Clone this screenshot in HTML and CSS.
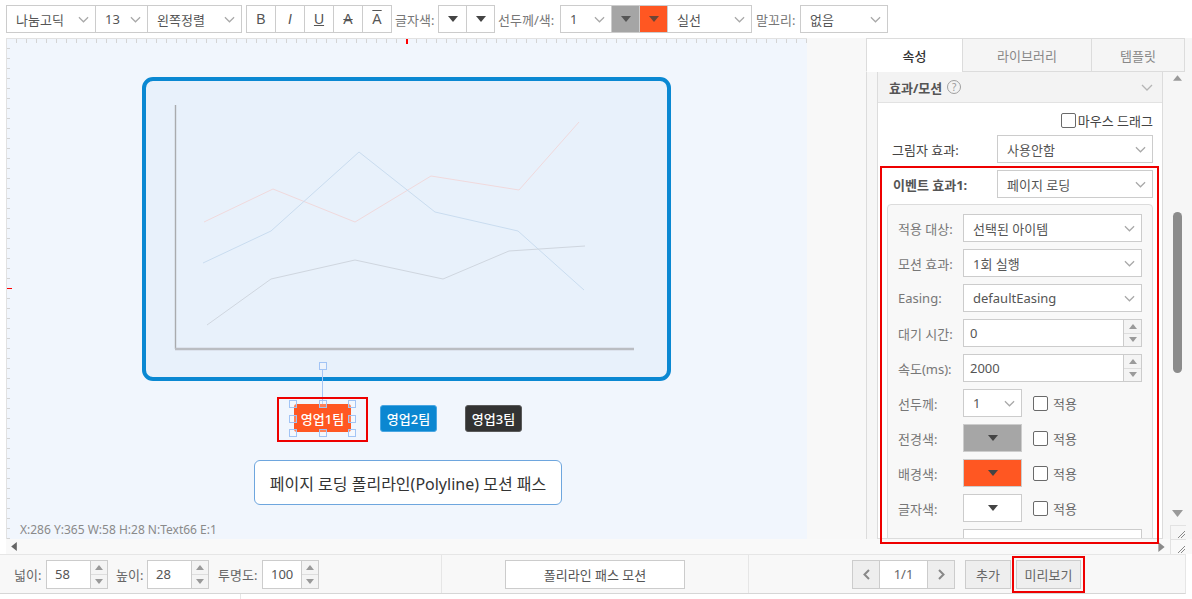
FILE: index.html
```html
<!DOCTYPE html>
<html lang="ko">
<head>
<meta charset="utf-8">
<title>모션 편집기</title>
<link rel="stylesheet" href="styles.css">
</head>
<body>
<div class="toolbar">
  <div class="grp">
    <div class="sel w-font"><span>나눔고딕</span><svg class="chev" viewBox="0 0 12 7"><path d="M1 1l5 5 5-5"/></svg></div>
    <div class="sel w-size"><span>13</span><svg class="chev" viewBox="0 0 12 7"><path d="M1 1l5 5 5-5"/></svg></div>
    <div class="sel w-align"><span>왼쪽정렬</span><svg class="chev" viewBox="0 0 12 7"><path d="M1 1l5 5 5-5"/></svg></div>
  </div>
  <div class="grp fmt">
    <div class="fbtn">B</div>
    <div class="fbtn it">I</div>
    <div class="fbtn ul">U</div>
    <div class="fbtn st">A</div>
    <div class="fbtn ov">A</div>
  </div>
  <span class="lbl l-fc">글자색:</span>
  <div class="grp">
    <div class="dd first"><svg class="tri" viewBox="0 0 10 6"><path d="M0 0h10L5 6z"/></svg></div>
    <div class="dd"><svg class="tri" viewBox="0 0 10 6"><path d="M0 0h10L5 6z"/></svg></div>
  </div>
  <span class="lbl l-line">선두께/색:</span>
  <div class="grp">
    <div class="sel w-lw"><span>1</span><svg class="chev" viewBox="0 0 12 7"><path d="M1 1l5 5 5-5"/></svg></div>
    <div class="dd gray"><svg class="tri" viewBox="0 0 10 6"><path d="M0 0h10L5 6z"/></svg></div>
    <div class="dd orange"><svg class="tri" viewBox="0 0 10 6"><path d="M0 0h10L5 6z"/></svg></div>
    <div class="sel w-ls"><span>실선</span><svg class="chev" viewBox="0 0 12 7"><path d="M1 1l5 5 5-5"/></svg></div>
  </div>
  <span class="lbl l-tail">말꼬리:</span>
  <div class="grp">
    <div class="sel w-tail"><span>없음</span><svg class="chev" viewBox="0 0 12 7"><path d="M1 1l5 5 5-5"/></svg></div>
  </div>
</div>

<div class="main">
  <div class="workspace">
    <div class="canvas">
      <div class="ruler-top"></div>
      <div class="ruler-left"></div>
      <div class="mark-top"></div>
      <div class="mark-left"></div>

      <div class="chart-box">
        <svg class="chart" viewBox="142 77 529 304" width="529" height="304">
          <polyline class="ln pink" points="204,222 273,189 355,222 431,176 519,190 579,122"/>
          <polyline class="ln blue" points="203,263 271,231 359,152 435,212 518,231 584,290"/>
          <polyline class="ln grayl" points="207,325 271,279 355,260 443,279 509,251 585,246"/>
          <line class="axis-y" x1="175.5" y1="105" x2="175.5" y2="349"/>
          <line class="axis-x" x1="175" y1="349" x2="634" y2="349"/>
        </svg>
      </div>

      <div class="conn"></div>
      <div class="handle h-top"></div>
      <div class="sel-rect"></div>
      <div class="team t1">영업1팀</div>
      <div class="handle h1"></div>
      <div class="handle h2"></div>
      <div class="handle h3"></div>
      <div class="handle h4"></div>
      <div class="handle h5"></div>
      <div class="handle h6"></div>
      <div class="handle h7"></div>
      <div class="handle h8"></div>
      <div class="team t2">영업2팀</div>
      <div class="team t3">영업3팀</div>

      <div class="caption">페이지 로딩 폴리라인(Polyline) 모션 패스</div>
      <div class="status">X:286 Y:365 W:58 H:28 N:Text66 E:1</div>
    </div>

    <div class="side-gap"></div>

    <div class="panel">
      <div class="tabs">
        <div class="tab active">속성</div>
        <div class="tab t-lib">라이브러리</div>
        <div class="tab t-tpl">템플릿</div>
      </div>
      <div class="pbody">
        <div class="pcontent">
          <div class="sec-head">
            <span class="sec-title">효과/모션</span>
            <span class="help">?</span>
            <svg class="chev sec-chev" viewBox="0 0 12 7"><path d="M1 1l5 5 5-5"/></svg>
          </div>
          <div class="drag-row"><span class="cb"></span><span>마우스 드래그</span></div>
          <div class="frow">
            <span class="flabel">그림자 효과:</span>
            <div class="fsel"><span>사용안함</span><svg class="chev" viewBox="0 0 12 7"><path d="M1 1l5 5 5-5"/></svg></div>
          </div>
          <div class="frow">
            <span class="flabel strong">이벤트 효과1:</span>
            <div class="fsel"><span>페이지 로딩</span><svg class="chev" viewBox="0 0 12 7"><path d="M1 1l5 5 5-5"/></svg></div>
          </div>
          <div class="ibox">
            <div class="irow">
              <span class="ilabel">적용 대상:</span>
              <div class="fsel full"><span>선택된 아이템</span><svg class="chev" viewBox="0 0 12 7"><path d="M1 1l5 5 5-5"/></svg></div>
            </div>
            <div class="irow">
              <span class="ilabel">모션 효과:</span>
              <div class="fsel full"><span>1회 실행</span><svg class="chev" viewBox="0 0 12 7"><path d="M1 1l5 5 5-5"/></svg></div>
            </div>
            <div class="irow">
              <span class="ilabel">Easing:</span>
              <div class="fsel full"><span>defaultEasing</span><svg class="chev" viewBox="0 0 12 7"><path d="M1 1l5 5 5-5"/></svg></div>
            </div>
            <div class="irow">
              <span class="ilabel">대기 시간:</span>
              <div class="numbox full">
                <span class="nval">0</span>
                <span class="spin"><span class="sp-up"><svg class="stri" viewBox="0 0 8 5"><path d="M0 5h8L4 0z"/></svg></span><span class="sp-dn"><svg class="stri" viewBox="0 0 8 5"><path d="M0 0h8L4 5z"/></svg></span></span>
              </div>
            </div>
            <div class="irow">
              <span class="ilabel">속도(ms):</span>
              <div class="numbox full">
                <span class="nval">2000</span>
                <span class="spin"><span class="sp-up"><svg class="stri" viewBox="0 0 8 5"><path d="M0 5h8L4 0z"/></svg></span><span class="sp-dn"><svg class="stri" viewBox="0 0 8 5"><path d="M0 0h8L4 5z"/></svg></span></span>
              </div>
            </div>
            <div class="irow">
              <span class="ilabel">선두께:</span>
              <div class="fsel small"><span>1</span><svg class="chev" viewBox="0 0 12 7"><path d="M1 1l5 5 5-5"/></svg></div>
              <span class="cb apply"></span><span class="apply-t">적용</span>
            </div>
            <div class="irow">
              <span class="ilabel">전경색:</span>
              <div class="cbox c-gray"><svg class="tri" viewBox="0 0 10 6"><path d="M0 0h10L5 6z"/></svg></div>
              <span class="cb apply"></span><span class="apply-t">적용</span>
            </div>
            <div class="irow">
              <span class="ilabel">배경색:</span>
              <div class="cbox c-orange"><svg class="tri" viewBox="0 0 10 6"><path d="M0 0h10L5 6z"/></svg></div>
              <span class="cb apply"></span><span class="apply-t">적용</span>
            </div>
            <div class="irow">
              <span class="ilabel">글자색:</span>
              <div class="cbox c-white"><svg class="tri" viewBox="0 0 10 6"><path d="M0 0h10L5 6z"/></svg></div>
              <span class="cb apply"></span><span class="apply-t">적용</span>
            </div>
            <div class="irow">
              <span class="ilabel">글상자색:</span>
              <div class="fsel full"><span>기본 색상 사용</span><svg class="chev" viewBox="0 0 12 7"><path d="M1 1l5 5 5-5"/></svg></div>
            </div>
          </div>
        </div>
        <div class="vscroll">
          <svg class="vs-arrow up" viewBox="0 0 8 5"><path d="M0 5h8L4 0z"/></svg>
          <div class="thumb"></div>
          <div class="vs-fill"></div>
          <svg class="vs-arrow dn" viewBox="0 0 8 5"><path d="M0 0h8L4 5z"/></svg>
          <div class="grip"><svg viewBox="0 0 10 10" width="10" height="10"><path d="M2 9L9 2M5 9L9 5"/></svg></div>
        </div>
      </div>
      <div class="hl-panel"></div>
    </div>
  </div>

  <div class="hscroll">
    <svg class="hs-arrow" viewBox="0 0 5 8"><path d="M5 0v8L0 4z"/></svg>
    <div class="hs-fill"></div>
    <svg class="hs-arrow right" viewBox="0 0 5 8"><path d="M0 0v8l5-4z"/></svg>
    <div class="grip"><svg viewBox="0 0 10 10" width="10" height="10"><path d="M2 9L9 2M5 9L9 5"/></svg></div>
  </div>
</div>

<div class="bottombar">
  <div class="bsec b1">
    <span class="blabel bl-w">넓이:</span>
    <div class="num n-w"><span class="nval">58</span><span class="spin"><span class="sp-up"><svg class="stri" viewBox="0 0 8 5"><path d="M0 5h8L4 0z"/></svg></span><span class="sp-dn"><svg class="stri" viewBox="0 0 8 5"><path d="M0 0h8L4 5z"/></svg></span></span></div>
    <span class="blabel bl-h">높이:</span>
    <div class="num n-w"><span class="nval">28</span><span class="spin"><span class="sp-up"><svg class="stri" viewBox="0 0 8 5"><path d="M0 5h8L4 0z"/></svg></span><span class="sp-dn"><svg class="stri" viewBox="0 0 8 5"><path d="M0 0h8L4 5z"/></svg></span></span></div>
    <span class="blabel bl-o">투명도:</span>
    <div class="num n-o"><span class="nval">100</span><span class="spin"><span class="sp-up"><svg class="stri" viewBox="0 0 8 5"><path d="M0 5h8L4 0z"/></svg></span><span class="sp-dn"><svg class="stri" viewBox="0 0 8 5"><path d="M0 0h8L4 5z"/></svg></span></span></div>
  </div>
  <div class="bsec b2">
    <div class="pbtn">폴리라인 패스 모션</div>
  </div>
  <div class="bsec b3">
    <div class="pager">
      <div class="pg-btn"><svg class="pchev" viewBox="0 0 7 11"><path d="M6 1L1.5 5.5 6 10"/></svg></div>
      <div class="pg-num">1/1</div>
      <div class="pg-btn"><svg class="pchev" viewBox="0 0 7 11"><path d="M1 1l4.5 4.5L1 10"/></svg></div>
    </div>
    <div class="gbtn add">추가</div>
    <div class="gbtn preview">미리보기</div>
  </div>
</div>
<div class="footer"><div class="ft-a"></div></div>
</body>
</html>
```

FILE: styles.css
```css
* { box-sizing: border-box; }
html, body { margin: 0; padding: 0; }
body {
  width: 1192px;
  height: 599px;
  overflow: hidden;
  background: #fff;
  font-family: "Noto Sans", "Noto Sans CJK KR", sans-serif;
  font-size: 13px;
  color: #555;
}
svg { display: block; }

/* ---------- toolbar ---------- */
.toolbar {
  height: 38px;
  display: flex;
  align-items: flex-start;
  padding: 5px 0 0 6px;
}
.grp {
  display: flex;
  height: 28px;
  border: 1px solid #ccc;
  background: #fff;
}
.grp > * + * { border-left: 1px solid #ccc; }
.sel {
  display: flex;
  align-items: center;
  justify-content: space-between;
  height: 100%;
  padding: 0 6px 0 9px;
  color: #555;
  white-space: nowrap;
}
.chev { width: 11px; height: 7px; fill: none; stroke: #a8a8a8; stroke-width: 1.3; flex: none; }
.w-font { width: 88px; }
.w-size { width: 52px; }
.w-align { width: 94px; }
.w-lw { width: 50px; }
.w-ls { width: 84px; }
.w-tail { width: 86px; }
.fmt { margin-left: 4px; }
.fbtn {
  width: 29px;
  height: 100%;
  display: flex;
  align-items: center;
  justify-content: center;
  font-family: "Liberation Sans", "Noto Sans", sans-serif;
  font-size: 14px;
  color: #555;
}
.fbtn:first-child { width: 28px; }
.fbtn.it { font-style: italic; }
.fbtn.ul { text-decoration: underline; }
.fbtn.st { text-decoration: line-through; }
.fbtn.ov { text-decoration: overline; }
.lbl {
  height: 28px;
  display: flex;
  align-items: center;
  color: #777;
  white-space: nowrap;
}
.l-fc { margin-left: 3px; width: 43px; }
.l-line { margin-left: 3px; width: 62px; }
.l-tail { margin-left: 4px; width: 44px; }
.dd {
  width: 28px;
  height: 100%;
  display: flex;
  align-items: center;
  justify-content: center;
}
.dd.first { width: 27px; }
.tri { width: 10px; height: 6px; fill: #444; }
.dd.gray { background: #a5a5a5; }
.dd.gray .tri { fill: #555; }
.dd.orange { background: #ff5722; }
.dd.orange .tri { fill: #6d4536; }

/* ---------- main ---------- */
.main { height: 516px; display: flex; flex-direction: column; }
.workspace { height: 501px; display: flex; }

.canvas {
  position: relative;
  margin-left: 6px;
  width: 801px;
  height: 100%;
  background: #f1f6fd;
  border-top: 1px solid #e2e2e2;
  border-left: 1px solid #e2e2e2;
  overflow: hidden;
}
.ruler-top {
  position: absolute;
  left: 0; top: 0; right: 0;
  height: 4px;
  background: repeating-linear-gradient(90deg, transparent 0 9px, #d4d4d4 9px 10px);
}
.ruler-left {
  position: absolute;
  left: 0; top: 0; bottom: 0;
  width: 3px;
  background: repeating-linear-gradient(180deg, transparent 0 9px, #d4d4d4 9px 10px);
}
.mark-top { position: absolute; left: 399px; top: 0; width: 2px; height: 5px; background: #ff0000; }
.mark-left { position: absolute; left: 0; top: 249px; width: 5px; height: 1px; background: #ff0000; }

.chart-box {
  position: absolute;
  left: 135px;
  top: 38px;
  width: 529px;
  height: 304px;
  border: 4px solid #0a88d2;
  border-radius: 11px;
  background: #e8f1fb;
}
.chart { position: absolute; left: -4px; top: -4px; }
.ln { fill: none; stroke-width: 1; }
.ln.pink { stroke: #f0d9dc; }
.ln.blue { stroke: #c9dcef; }
.ln.grayl { stroke: #cfd6df; }
.axis-y { stroke: #a9abae; stroke-width: 1.4; }
.axis-x { stroke: #babdc2; stroke-width: 2.4; }

.conn { position: absolute; left: 315px; top: 330px; width: 1px; height: 35px; background: #a5c6f5; }
.handle {
  position: absolute;
  width: 8px;
  height: 8px;
  border: 1px solid #a2c4f5;
  background: rgba(255, 255, 255, 0.25);
}
.h-top { left: 312px; top: 323px; }
.h1 { left: 282px; top: 361px; }
.h2 { left: 312px; top: 361px; }
.h3 { left: 341px; top: 361px; }
.h4 { left: 282px; top: 376px; }
.h5 { left: 341px; top: 376px; }
.h6 { left: 282px; top: 390px; }
.h7 { left: 312px; top: 390px; }
.h8 { left: 341px; top: 390px; }
.sel-rect {
  position: absolute;
  left: 270px;
  top: 358px;
  width: 91px;
  height: 45px;
  border: 2px solid #ee0000;
}
.team {
  position: absolute;
  width: 57px;
  height: 27px;
  display: flex;
  align-items: center;
  justify-content: center;
  color: #fff;
  font-size: 13px;
  font-weight: 500;
  border-radius: 3px;
}
.team.t1 { left: 287px; top: 365px; height: 28px; background: #ff5722; }
.team.t2 { left: 373px; top: 366px; background: #0b87d1; border: 1px solid #4aa6e2; }
.team.t3 { left: 458px; top: 366px; background: #333; border: 1px solid #5a5a5a; }

.caption {
  position: absolute;
  left: 247px;
  top: 421px;
  width: 308px;
  height: 45px;
  display: flex;
  align-items: center;
  justify-content: center;
  background: #fff;
  border: 1.5px solid #6ea6de;
  border-radius: 6px;
  font-size: 16px;
  color: #333;
}
.status {
  position: absolute;
  left: 13px;
  top: 482px;
  font-size: 12px;
  color: #8a8a8a;
}

.side-gap { width: 59px; background: #f8f8f8; }

/* ---------- right panel ---------- */
.panel {
  position: relative;
  width: 326px;
  display: flex;
  flex-direction: column;
  background: #f6f6f6;
}
.tabs { height: 34px; display: flex; flex: none; }
.tab {
  height: 34px;
  display: flex;
  align-items: center;
  justify-content: center;
  border: 1px solid #dcdcdc;
  border-right: none;
  background: #f5f5f5;
  color: #888;
}
.tab.active { width: 96px; background: #fff; color: #333; font-weight: 500; border-bottom-color: #fff; }
.tab.t-lib { width: 129px; }
.tab.t-tpl { width: 94px; border-right: 1px solid #dcdcdc; }

.pbody {
  flex: 1;
  display: flex;
  border-left: 1px solid #dcdcdc;
  padding-left: 10px;
  min-height: 0;
}
.pcontent {
  width: 286px;
  height: 100%;
  background: #fff;
  border-left: 1px solid #dcdcdc;
  border-right: 1px solid #dcdcdc;
  border-bottom: 1px solid #dcdcdc;
  overflow: hidden;
}
.sec-head {
  height: 31px;
  display: flex;
  align-items: center;
  padding: 0 9px 0 11px;
  background: #f3f3f3;
  border-bottom: 1px solid #e2e2e2;
}
.sec-title { color: #555; font-weight: 700; }
.help {
  margin-left: 5px;
  width: 14px;
  height: 14px;
  border: 1px solid #a0a0a0;
  border-radius: 50%;
  display: flex;
  align-items: center;
  justify-content: center;
  font-size: 10px;
  color: #999;
}
.sec-chev { margin-left: auto; stroke: #b5b5b5; width: 12px; }
.drag-row {
  margin-top: 10px;
  height: 15px;
  display: flex;
  align-items: center;
  justify-content: flex-end;
  padding-right: 9px;
  color: #444;
}
.cb {
  width: 15px;
  height: 15px;
  border: 1px solid #6a6a6a;
  border-radius: 2px;
  background: #fff;
  flex: none;
  margin-right: 2px;
}
.frow {
  margin-top: 7px;
  height: 28px;
  display: flex;
  align-items: center;
  padding: 0 9px 0 14px;
}
.flabel { width: 105px; color: #444; }
.flabel.strong { font-weight: 700; color: #555; padding-left: 1px; }
.fsel {
  height: 28px;
  width: 156px;
  display: flex;
  align-items: center;
  justify-content: space-between;
  padding: 0 6px 0 9px;
  border: 1px solid #ccc;
  background: #fff;
  color: #555;
  white-space: nowrap;
}
.ibox {
  margin: 6px 9px 0 9px;
  padding: 9px 10px;
  background: #f8f8f8;
  border: 1px solid #dcdcdc;
  border-radius: 4px;
}
.irow {
  height: 28px;
  display: flex;
  align-items: center;
  margin-bottom: 7px;
}
.ilabel { width: 65px; color: #777; white-space: nowrap; }
.fsel.full { width: 179px; }
.fsel.small { width: 59px; }
.numbox {
  height: 28px;
  width: 179px;
  display: flex;
  border: 1px solid #ccc;
  background: #fff;
}
.nval { flex: 1; display: flex; align-items: center; padding-left: 6px; color: #555; }
.spin {
  width: 18px;
  display: flex;
  flex-direction: column;
  border-left: 1px solid #ccc;
  background: #f4f4f4;
}
.sp-up, .sp-dn { flex: 1; display: flex; align-items: center; justify-content: center; }
.sp-up { border-bottom: 1px solid #ddd; }
.stri { width: 8px; height: 5px; fill: #9a9a9a; }
.cbox {
  width: 59px;
  height: 28px;
  border: 1px solid #ccc;
  display: flex;
  align-items: center;
  justify-content: center;
}
.cbox .tri { fill: #444; }
.c-gray { background: #a6a6a6; }
.c-orange { background: #ff5722; }
.c-white { background: #fff; }
.cb.apply { margin-left: 11px; margin-right: 0; }
.apply-t { margin-left: 5px; color: #666; }

.vscroll {
  width: 29px;
  display: flex;
  flex-direction: column;
  align-items: center;
  background: #f6f6f6;
}
.vs-arrow { width: 9px; height: 6px; fill: #9a9a9a; flex: none; }
.vs-arrow.up { margin-top: 3px; }
.thumb {
  margin-top: 131px;
  width: 9px;
  height: 161px;
  border-radius: 5px;
  background: #8c8c8c;
  flex: none;
}
.vs-fill { flex: 1; }
.vs-arrow.dn { margin-bottom: 8px; width: 11px; height: 7px; }
.grip {
  width: 16px;
  height: 14px;
  display: flex;
  align-items: flex-end;
  justify-content: flex-end;
  border-left: 1px solid #e2e2e2;
  border-top: 1px solid #e2e2e2;
  flex: none;
  align-self: flex-end;
  margin-right: 6px;
}
.grip path { stroke: #888; stroke-width: 1; fill: none; }

.hl-panel {
  position: absolute;
  left: 14px;
  top: 128px;
  width: 279px;
  height: 378px;
  border: 2px solid #ee0000;
}

.hscroll {
  height: 15px;
  display: flex;
  align-items: center;
  margin-left: 6px;
  background: #f9f9f9;
}
.hs-arrow { width: 6px; height: 9px; fill: #666; margin-left: 5px; flex: none; }
.hs-fill { flex: 1; }
.hs-arrow.right { fill: #8a8a8a; margin-left: 0; margin-right: 5px; width: 7px; height: 10px; }
.hscroll .grip { height: 15px; }

/* ---------- bottom bar ---------- */
.bottombar {
  height: 40px;
  width: 1186px;
  display: flex;
  background: #f8f8f8;
  border-top: 1px solid #e6e6e6;
  border-bottom: 1px solid #d6d6d6;
  border-right: 1px solid #e6e6e6;
}
.bsec { height: 100%; display: flex; align-items: center; }
.b1 { width: 441px; padding-left: 14px; }
.b2 { width: 307px; border-left: 1px solid #e6e6e6; padding-left: 63px; }
.b3 { flex: 1; border-left: 1px solid #e6e6e6; padding-left: 103px; }
.blabel { color: #666; white-space: nowrap; }
.bl-w { width: 32px; }
.bl-h { width: 31px; margin-left: 8px; }
.bl-o { width: 44px; margin-left: 9px; }
.num {
  height: 29px;
  display: flex;
  border: 1px solid #ccc;
  background: #fff;
}
.num .nval { padding-left: 8px; }
.num .spin { width: 17px; }
.n-w { width: 62px; }
.n-o { width: 57px; }
.pbtn {
  width: 180px;
  height: 29px;
  display: flex;
  align-items: center;
  justify-content: center;
  background: #fff;
  border: 1px solid #ccc;
  color: #555;
}
.pager {
  display: flex;
  height: 29px;
  border: 1px solid #ccc;
}
.pg-btn {
  width: 26px;
  background: #eee;
  display: flex;
  align-items: center;
  justify-content: center;
}
.pg-num {
  width: 49px;
  background: #fff;
  display: flex;
  align-items: center;
  justify-content: center;
  border-left: 1px solid #ccc;
  border-right: 1px solid #ccc;
  color: #666;
}
.pchev { width: 7px; height: 11px; fill: none; stroke: #888; stroke-width: 2; }
.gbtn {
  height: 29px;
  display: flex;
  align-items: center;
  justify-content: center;
  background: #eee;
  border: 1px solid #ccc;
  color: #666;
}
.gbtn.add { width: 46px; margin-left: 10px; }
.gbtn.preview { width: 65px; margin-left: 5px; outline: 2px solid #ee0000; outline-offset: 2px; }

.footer { height: 5px; display: flex; }
.ft-a { width: 241px; border-right: 1px solid #e6e6e6; }
```
